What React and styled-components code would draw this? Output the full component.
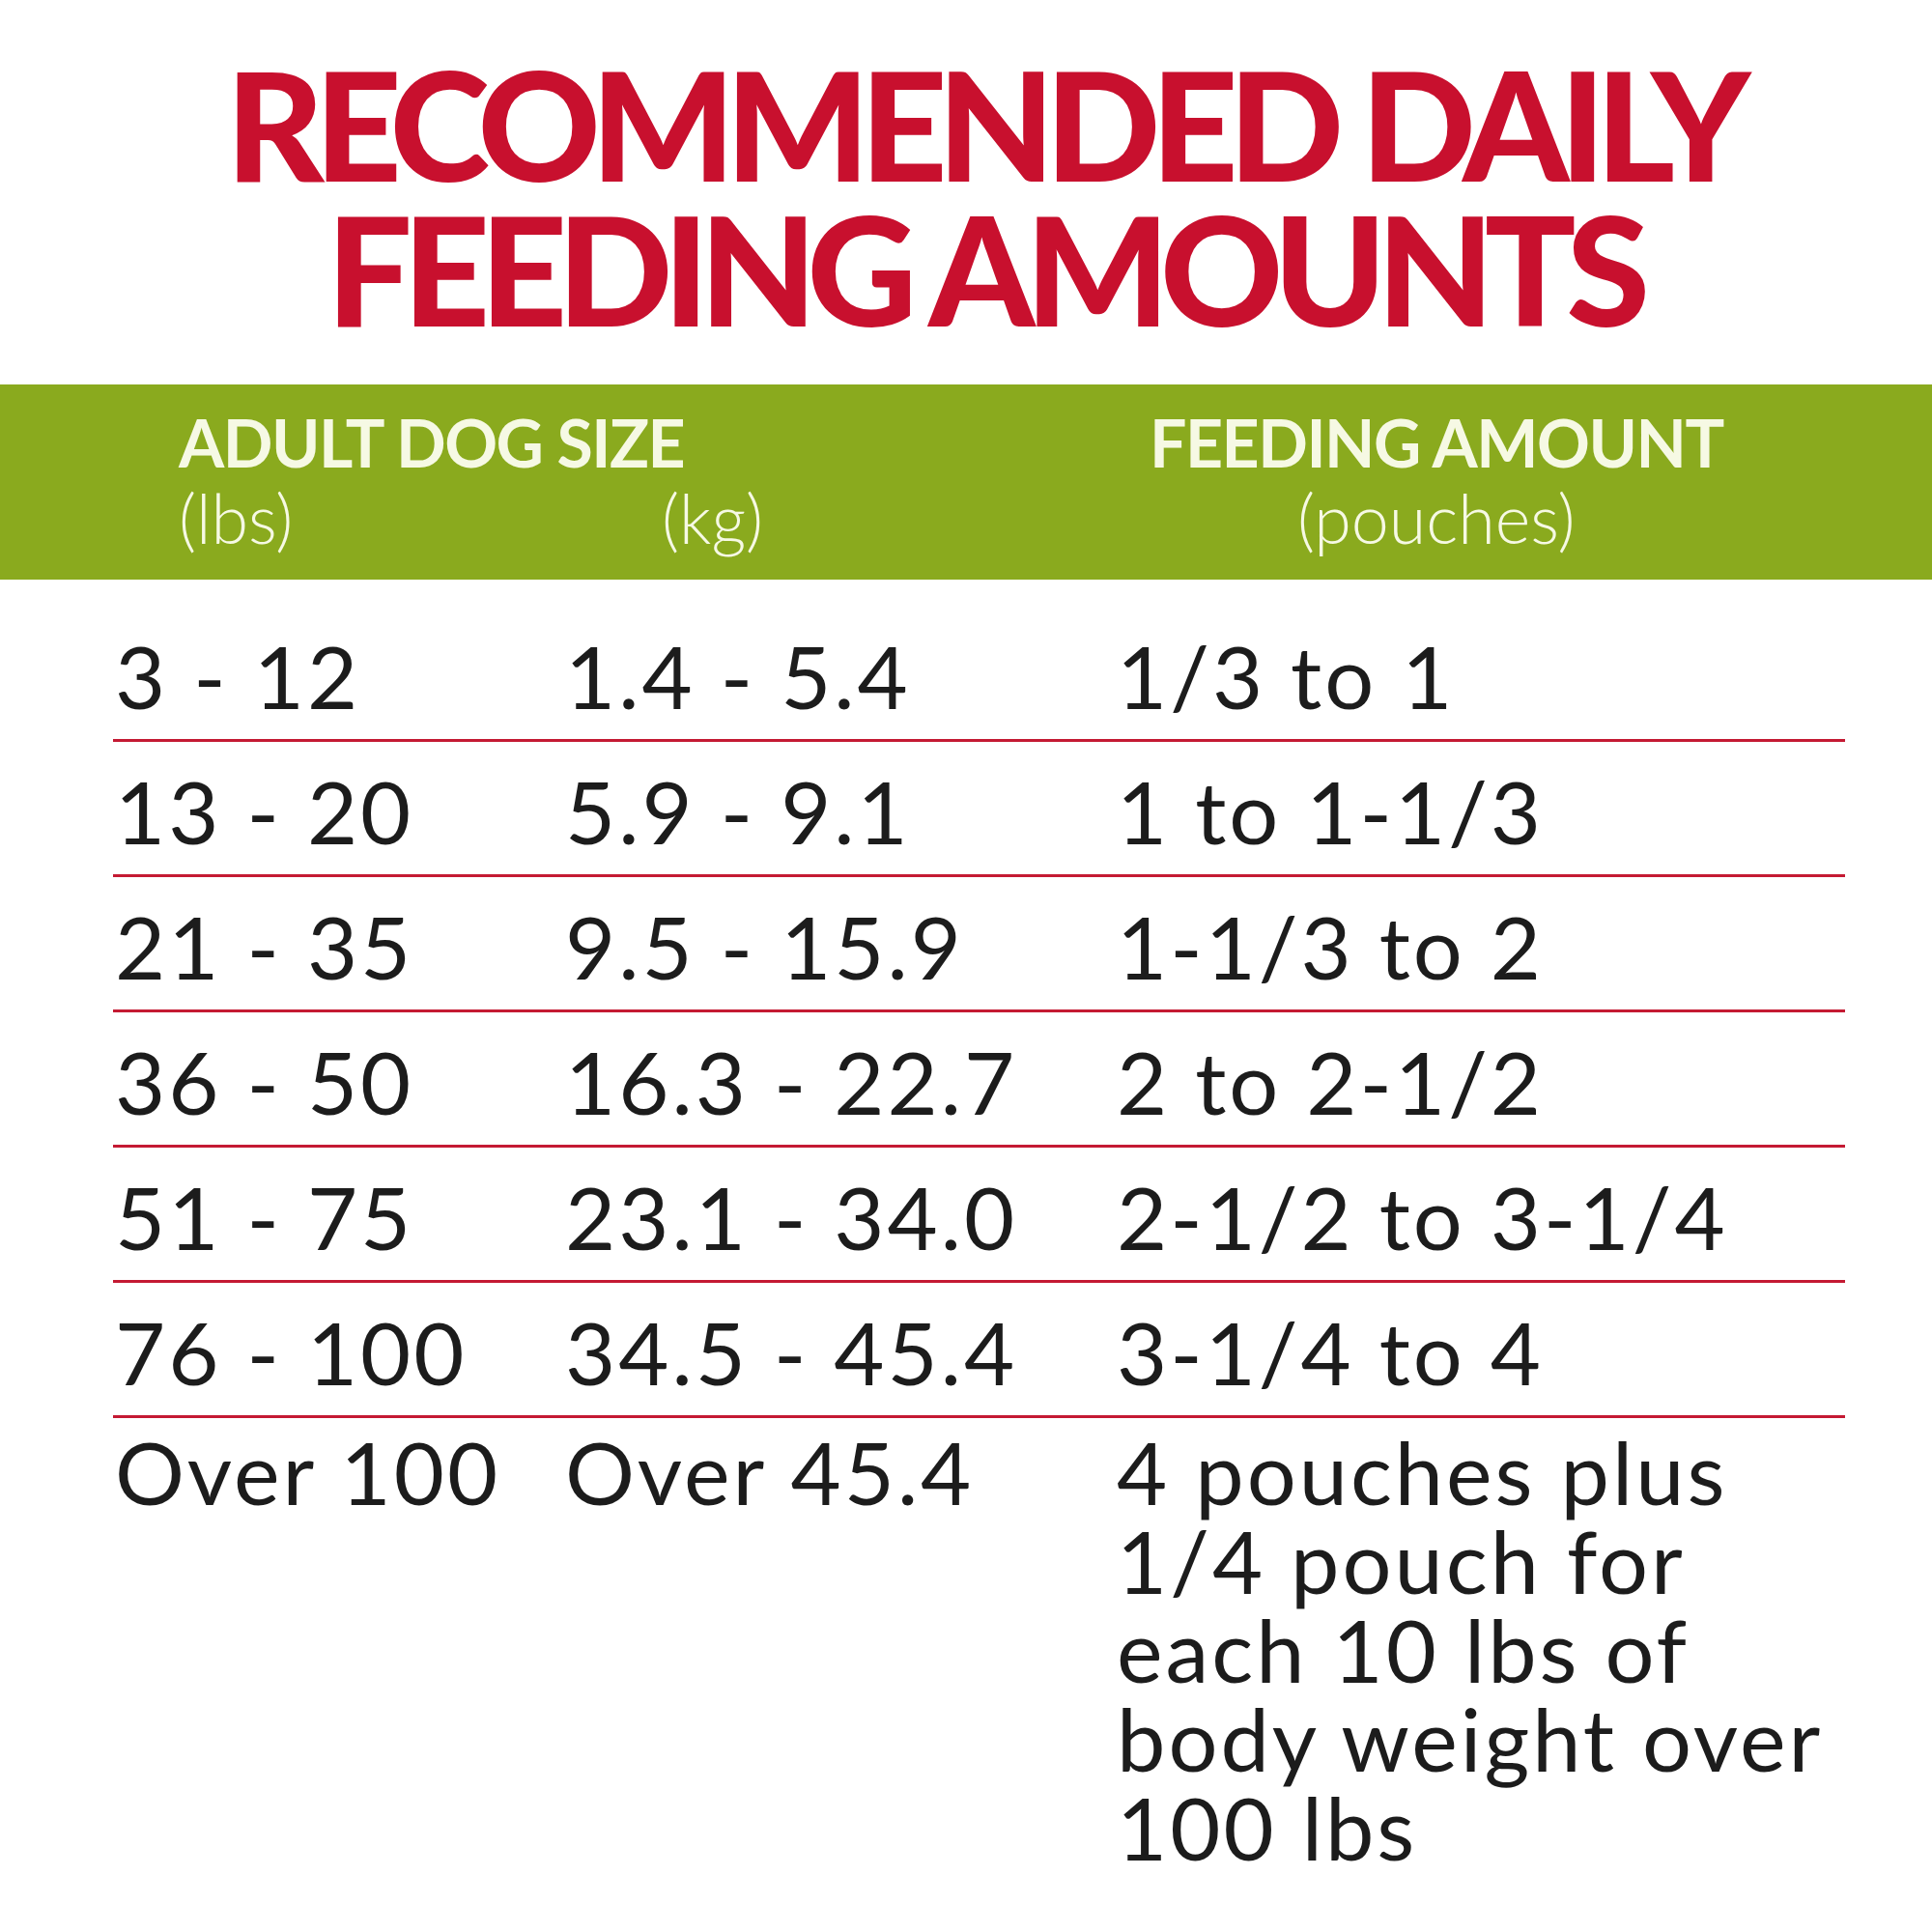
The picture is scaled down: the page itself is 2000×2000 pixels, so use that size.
import React from "react";
import styled, { createGlobalStyle } from "styled-components";

const GlobalStyle = createGlobalStyle`
  html, body {
    margin: 0;
    padding: 0;
    background: #ffffff;
  }
`;

const Page = styled.div`
  width: 2000px;
  height: 2000px;
  overflow: hidden;
  background: #ffffff;
  font-family: "Lato", "Noto Sans", sans-serif;
  color: #1c1c1c;
`;

const Title = styled.h1`
  margin: 0;
  padding: 52px 0 0 36px;
  text-align: center;
  font-family: "Lato", "Noto Sans", sans-serif;
  font-weight: 900;
  font-size: 157px;
  line-height: 150px;
  letter-spacing: -10px;
  color: #c8102e;
`;

const TitleLine = styled.span`
  display: block;
`;

const Band = styled.div`
  margin-top: 46px;
  height: 202px;
  box-sizing: border-box;
  padding: 26px 0 0 185px;
  background: #8aaa1e;
  color: #f6f9e4;
  display: flex;
`;

const HeadGroup = styled.div`
  display: flex;
  flex-direction: column;
  align-items: ${(p) => (p.center ? "center" : "flex-start")};
  width: ${(p) => (p.width ? `${p.width}px` : "auto")};
`;

const HeadLabel = styled.div`
  font-weight: 700;
  font-size: 68px;
  line-height: 68px;
  letter-spacing: -1.5px;
`;

const UnitRow = styled.div`
  display: grid;
  grid-template-columns: ${(p) => p.cols || "auto"};
  margin-top: 6px;
`;

const Unit = styled.div`
  font-weight: 300;
  font-size: 70px;
  line-height: 76px;
`;

const Table = styled.div`
  padding: 28px 90px 0 117px;
`;

const Row = styled.div`
  display: grid;
  grid-template-columns: 466px 571px 1fr;
  align-items: ${(p) => (p.tall ? "start" : "end")};
  box-sizing: border-box;
  height: ${(p) => (p.tall ? "auto" : "140px")};
  padding: ${(p) => (p.tall ? "9px 0 0" : "0 0 20px")};
  border-bottom: ${(p) => (p.tall ? "none" : "3px solid #c41a33")};
`;

const Cell = styled.div`
  font-weight: 400;
  font-size: 90px;
  line-height: 92px;
  letter-spacing: 3px;
  padding-left: 2px;
  white-space: pre-line;
`;

const rows = [
  ["3 - 12", "1.4 - 5.4", "1/3 to 1"],
  ["13 - 20", "5.9 - 9.1", "1 to 1-1/3"],
  ["21 - 35", "9.5 - 15.9", "1-1/3 to 2"],
  ["36 - 50", "16.3 - 22.7", "2 to 2-1/2"],
  ["51 - 75", "23.1 - 34.0", "2-1/2 to 3-1/4"],
  ["76 - 100", "34.5 - 45.4", "3-1/4 to 4"],
];

export default function App() {
  return (
    <Page>
      <GlobalStyle />
      <Title>
        <TitleLine>RECOMMENDED DAILY</TitleLine>
        <TitleLine>FEEDING AMOUNTS</TitleLine>
      </Title>

      <Band>
        <HeadGroup width={1005}>
          <HeadLabel>ADULT DOG SIZE</HeadLabel>
          <UnitRow cols="500px auto">
            <Unit>(lbs)</Unit>
            <Unit>(kg)</Unit>
          </UnitRow>
        </HeadGroup>
        <HeadGroup center>
          <HeadLabel>FEEDING AMOUNT</HeadLabel>
          <UnitRow>
            <Unit>(pouches)</Unit>
          </UnitRow>
        </HeadGroup>
      </Band>

      <Table>
        {rows.map((r) => (
          <Row key={r[0]}>
            <Cell>{r[0]}</Cell>
            <Cell>{r[1]}</Cell>
            <Cell>{r[2]}</Cell>
          </Row>
        ))}
        <Row tall>
          <Cell>Over 100</Cell>
          <Cell>Over 45.4</Cell>
          <Cell>
            {"4 pouches plus\n1/4 pouch for\neach 10 lbs of\nbody weight over\n100 lbs"}
          </Cell>
        </Row>
      </Table>
    </Page>
  );
}
